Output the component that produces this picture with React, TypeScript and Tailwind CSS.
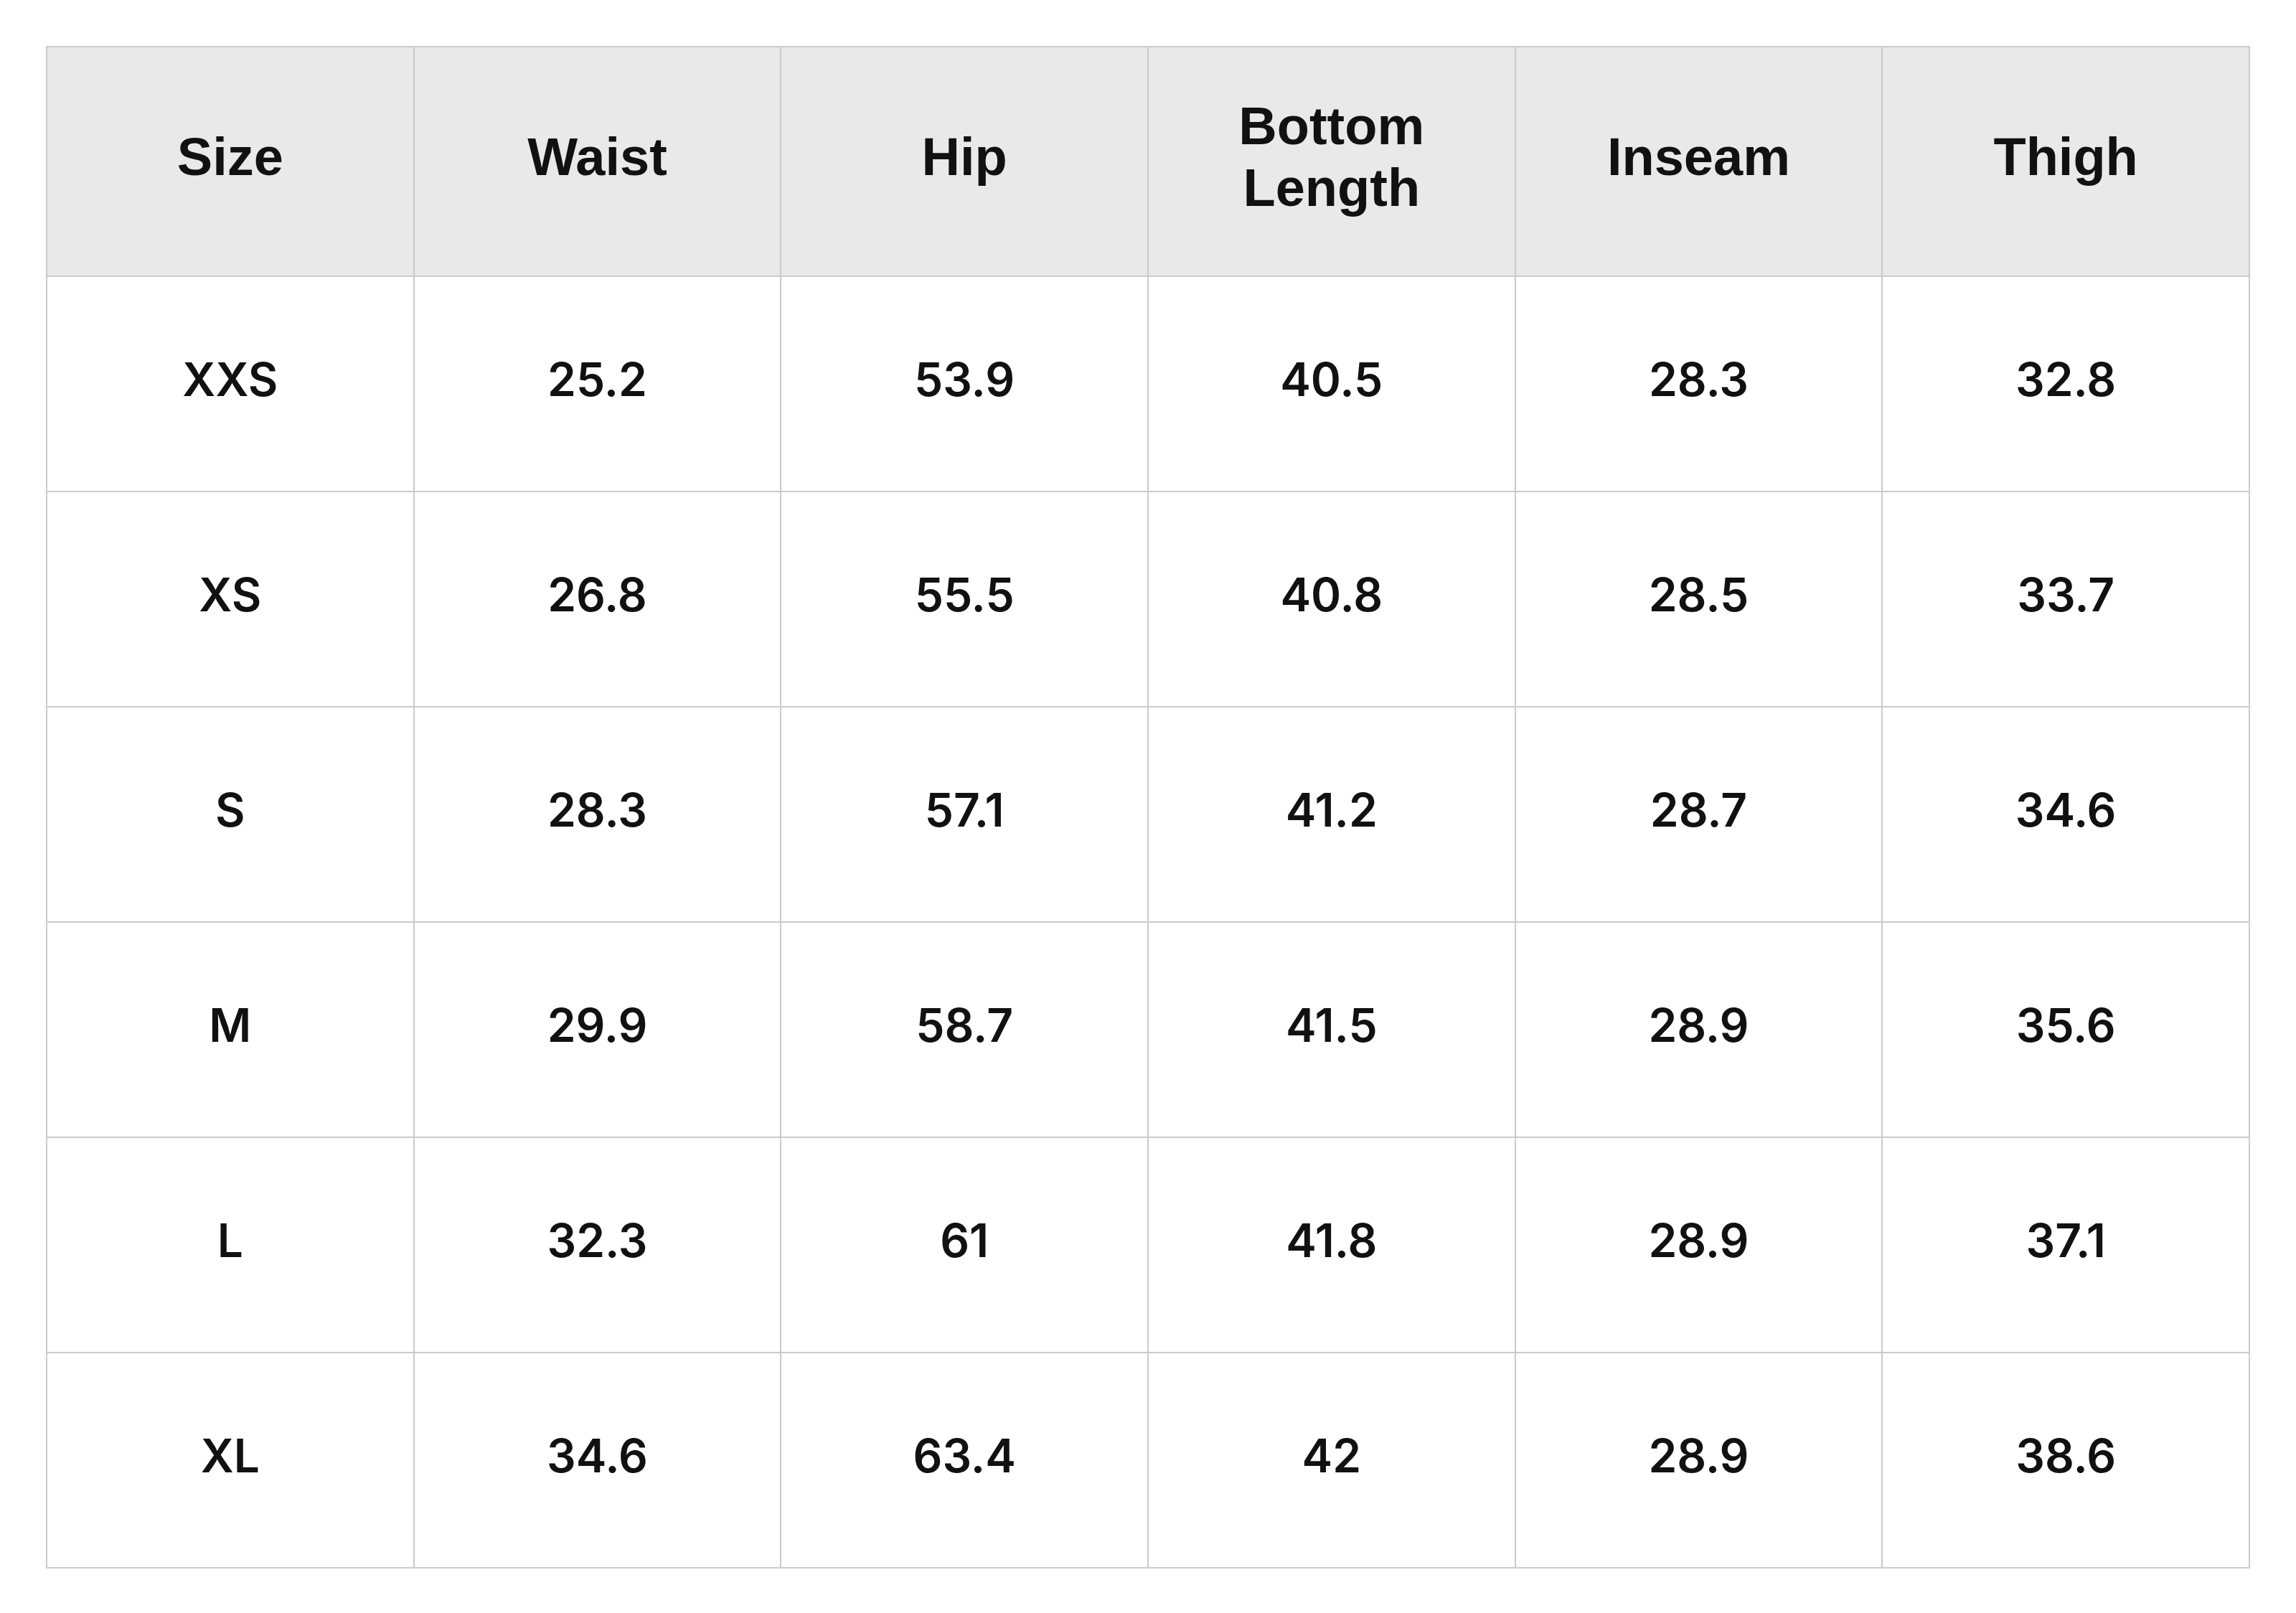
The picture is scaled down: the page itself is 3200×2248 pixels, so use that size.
import React from "react";

const headers = ["Size", "Waist", "Hip", "Bottom Length", "Inseam", "Thigh"];

const rows: string[][] = [
  ["XXS", "25.2", "53.9", "40.5", "28.3", "32.8"],
  ["XS", "26.8", "55.5", "40.8", "28.5", "33.7"],
  ["S", "28.3", "57.1", "41.2", "28.7", "34.6"],
  ["M", "29.9", "58.7", "41.5", "28.9", "35.6"],
  ["L", "32.3", "61", "41.8", "28.9", "37.1"],
  ["XL", "34.6", "63.4", "42", "28.9", "38.6"],
];

export default function App() {
  return (
    <div className="min-h-screen bg-white p-[64px] font-['Liberation_Sans',Arial,sans-serif] text-[#111111]">
      <table className="w-full table-fixed border-collapse">
        <thead>
          <tr className="h-[320px] bg-[#e9e9e9]">
            {headers.map((h) => (
              <th
                key={h}
                className="border-2 border-[#cbcbcb] px-[100px] pb-[12px] text-center text-[74px] font-bold leading-[86px]"
              >
                {h}
              </th>
            ))}
          </tr>
        </thead>
        <tbody>
          {rows.map((row) => (
            <tr key={row[0]} className="h-[300px]">
              {row.map((cell, i) => (
                <td
                  key={i}
                  className="border-2 border-[#cbcbcb] pb-[12px] text-center font-['Inter',sans-serif] text-[64px] font-semibold"
                >
                  {cell}
                </td>
              ))}
            </tr>
          ))}
        </tbody>
      </table>
    </div>
  );
}
